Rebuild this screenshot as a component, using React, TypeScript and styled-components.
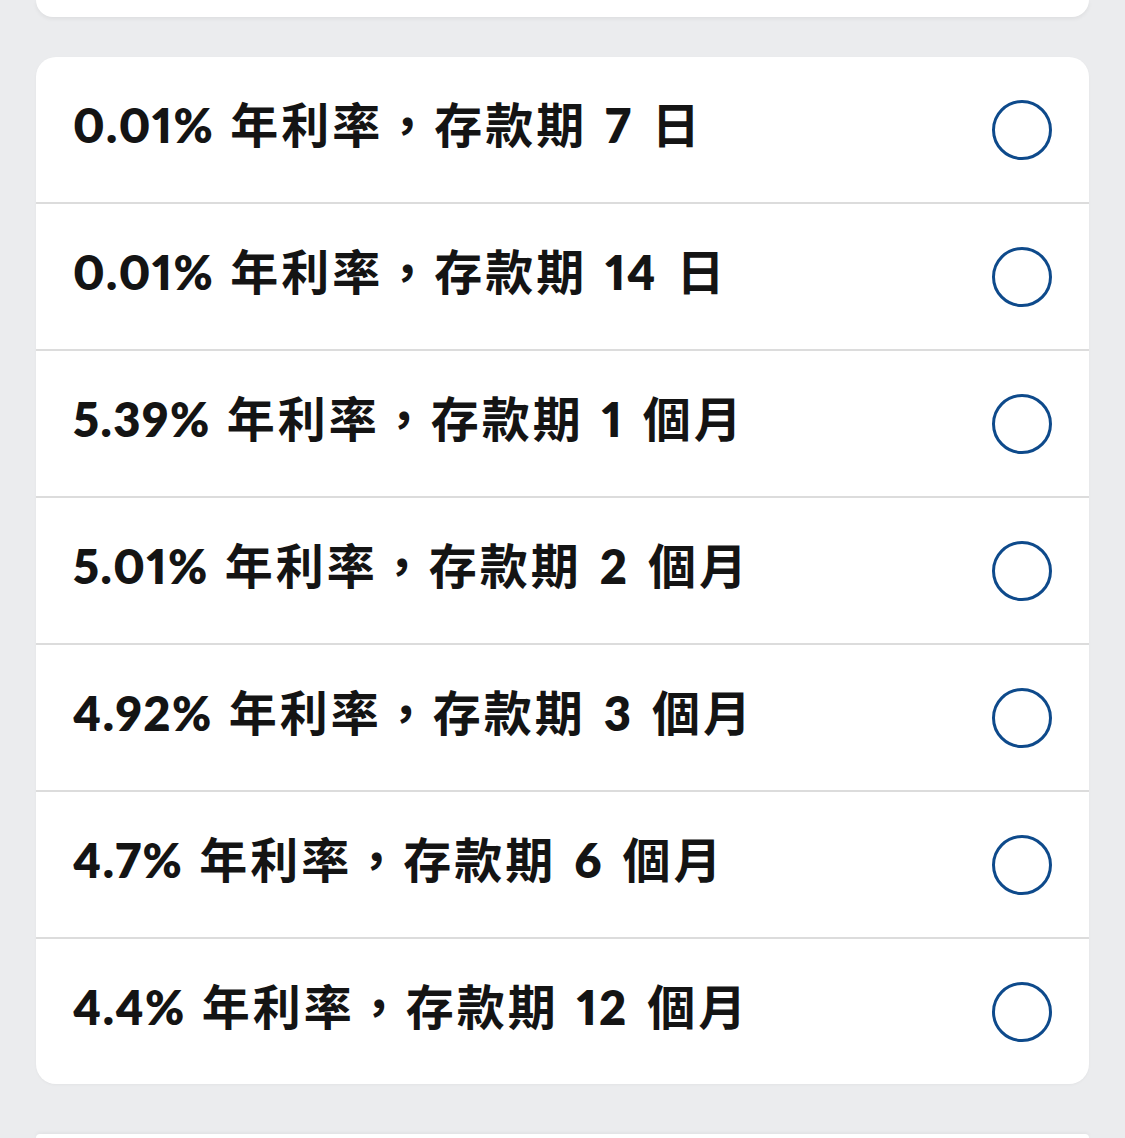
import React from "react";
import styled, { createGlobalStyle } from "styled-components";

const Global = createGlobalStyle`
  html, body { margin: 0; padding: 0; background: #ebecee; }
  body { font-family: "Lato", "Noto Sans CJK TC", sans-serif; }
`;

const Page = styled.div`
  width: 1125px;
  height: 1138px;
  overflow: hidden;
  box-sizing: border-box;
  padding: 0 36px;
  display: flex;
  flex-direction: column;
`;

const TopCard = styled.div`
  height: 17px;
  flex: none;
  background: #fff;
  border-radius: 0 0 20px 20px;
  box-shadow: 0 2px 4px rgba(0, 0, 0, 0.06);
`;

const Card = styled.div`
  margin-top: 40px;
  flex: none;
  background: #fff;
  border-radius: 20px;
  overflow: hidden;
  box-shadow: 0 1px 3px rgba(0, 0, 0, 0.04);
`;

const BottomCard = styled.div`
  margin-top: 50px;
  flex: 1;
  background: #fff;
  border-radius: 20px 20px 0 0;
  box-shadow: 0 -1px 4px rgba(0, 0, 0, 0.06);
`;

const Row = styled.div`
  height: 145px;
  box-sizing: border-box;
  display: flex;
  align-items: center;
  justify-content: space-between;
  padding: 0 37px;
  & + & {
    border-top: 2px solid #dcdcdc;
    height: 147px;
  }
`;

const Label = styled.span`
  font-family: "Lato", "Noto Sans CJK TC", sans-serif;
  font-weight: 800;
  font-size: 44px;
  line-height: 60px;
  color: #141414;
  white-space: pre;
  margin-top: -12px;
`;

const Num = styled.span`
  font-size: 47px;
  letter-spacing: 2px;
  font-variant-numeric: proportional-nums;
`;

const Rate = styled(Num)`
  letter-spacing: 1.5px;
`;

const Han = styled.span`
  font-family: "Noto Sans CJK TC", sans-serif;
  font-weight: 700;
  font-size: 48px;
  letter-spacing: 3px;
`;

const Gap = styled.span<{ $w: number }>`
  display: inline-block;
  width: ${(p) => p.$w}px;
`;

const Radio = styled.span`
  width: 60px;
  height: 60px;
  box-sizing: border-box;
  border: 3px solid #0e4a8b;
  border-radius: 50%;
  flex: none;
`;

type Item = { rate: string; term: string; unit: string };

const items: Item[] = [
  { rate: "0.01%", term: "7", unit: "日" },
  { rate: "0.01%", term: "14", unit: "日" },
  { rate: "5.39%", term: "1", unit: "個月" },
  { rate: "5.01%", term: "2", unit: "個月" },
  { rate: "4.92%", term: "3", unit: "個月" },
  { rate: "4.7%", term: "6", unit: "個月" },
  { rate: "4.4%", term: "12", unit: "個月" },
];

export default function App() {
  return (
    <>
      <Global />
      <Page>
        <TopCard />
        <Card>
          {items.map((it, i) => (
            <Row key={i}>
              <Label>
                <Rate>{it.rate}</Rate>
                <Gap $w={16} />
                <Han>年利率，存款期</Han>
                <Gap $w={18} />
                <Num>{it.term}</Num>
                <Gap $w={19} />
                <Han>{it.unit}</Han>
              </Label>
              <Radio />
            </Row>
          ))}
        </Card>
        <BottomCard />
      </Page>
    </>
  );
}
